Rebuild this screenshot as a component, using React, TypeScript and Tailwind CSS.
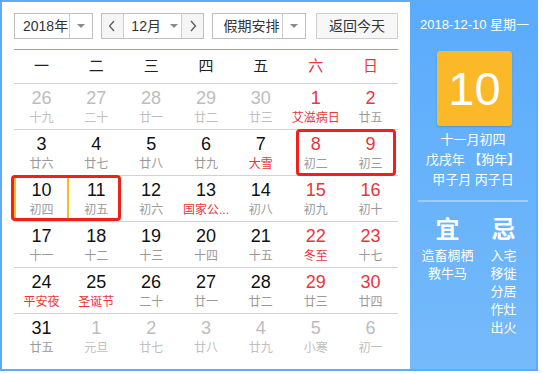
import React from 'react';

type Day = { d: number; l: string; other?: boolean; hol?: boolean; today?: boolean };

const weeks: Day[][] = [
  [
    { d: 26, l: '十九', other: true },
    { d: 27, l: '二十', other: true },
    { d: 28, l: '廿一', other: true },
    { d: 29, l: '廿二', other: true },
    { d: 30, l: '廿三', other: true },
    { d: 1, l: '艾滋病日', hol: true },
    { d: 2, l: '廿五' },
  ],
  [
    { d: 3, l: '廿六' },
    { d: 4, l: '廿七' },
    { d: 5, l: '廿八' },
    { d: 6, l: '廿九' },
    { d: 7, l: '大雪', hol: true },
    { d: 8, l: '初二' },
    { d: 9, l: '初三' },
  ],
  [
    { d: 10, l: '初四', today: true },
    { d: 11, l: '初五' },
    { d: 12, l: '初六' },
    { d: 13, l: '国家公...', hol: true },
    { d: 14, l: '初八' },
    { d: 15, l: '初九' },
    { d: 16, l: '初十' },
  ],
  [
    { d: 17, l: '十一' },
    { d: 18, l: '十二' },
    { d: 19, l: '十三' },
    { d: 20, l: '十四' },
    { d: 21, l: '十五' },
    { d: 22, l: '冬至', hol: true },
    { d: 23, l: '十七' },
  ],
  [
    { d: 24, l: '平安夜', hol: true },
    { d: 25, l: '圣诞节', hol: true },
    { d: 26, l: '二十' },
    { d: 27, l: '廿一' },
    { d: 28, l: '廿二' },
    { d: 29, l: '廿三' },
    { d: 30, l: '廿四' },
  ],
  [
    { d: 31, l: '廿五' },
    { d: 1, l: '元旦', other: true },
    { d: 2, l: '廿七', other: true },
    { d: 3, l: '廿八', other: true },
    { d: 4, l: '廿九', other: true },
    { d: 5, l: '小寒', other: true },
    { d: 6, l: '初一', other: true },
  ],
];

const weekdays = ['一', '二', '三', '四', '五', '六', '日'];

function Caret() {
  return <span className="w-0 h-0 border-x-[4px] border-x-transparent border-t-[4px] border-t-[#8a8a8a]" />;
}

function Chevron({ dir }: { dir: 'l' | 'r' }) {
  return (
    <svg width="8" height="12" viewBox="0 0 8 12" fill="none" stroke="#555" strokeWidth="1.2">
      {dir === 'l' ? <polyline points="6,1 1.5,6 6,11" /> : <polyline points="2,1 6.5,6 2,11" />}
    </svg>
  );
}

function DayCell({ day, col }: { day: Day; col: number }) {
  const weekend = col >= 5;
  let numColor = 'text-[#111]';
  if (day.other) numColor = 'text-[#bdbdbd]';
  else if (weekend) numColor = 'text-[#e8363b]';
  let lunarColor = 'text-[#9a9a9a]';
  if (day.other) lunarColor = 'text-[#c0c0c0]';
  else if (day.hol) lunarColor = 'text-[#e8363b]';
  return (
    <div
      className={`h-[46px] border-t border-[#d2d2d2] flex flex-col items-center pt-[4px] ${
        day.today ? 'shadow-[inset_0_0_0_2px_#fbb829]' : ''
      }`}
    >
      <span className={`text-[18px] leading-[20px] ${numColor}`}>{day.d}</span>
      <span className={`mt-[2px] text-[12px] leading-[16px] whitespace-nowrap ${lunarColor}`}>{day.l}</span>
    </div>
  );
}

export default function App() {
  return (
    <div
      className="w-[538px] h-[371px] border-2 border-[#5eabf7] flex bg-white"
      style={{ fontFamily: '"Liberation Sans", "Noto Sans CJK SC", sans-serif' }}
    >
      <div className="w-[408px] bg-white px-[12px] pt-[11px] flex flex-col">
        <div className="flex items-center h-[26px] text-[14px] text-[#333]">
          <div className="w-[79px] h-[26px] border border-[#bfbfbf] flex items-center">
            <span className="flex-1 pl-[8px] leading-[24px]">2018年</span>
            <span className="w-[23px] h-full border-l border-[#d0d0d0] flex items-center justify-center">
              <Caret />
            </span>
          </div>
          <div className="ml-[8px] w-[104px] h-[26px] border border-[#bfbfbf] flex items-center">
            <span className="w-[22px] h-full bg-[#f5f5f5] border-r border-[#d0d0d0] flex items-center justify-center">
              <Chevron dir="l" />
            </span>
            <span className="flex-1 h-full flex items-center justify-center gap-[9px] pl-[4px]">
              <span className="leading-[24px]">12月</span>
              <Caret />
            </span>
            <span className="w-[22px] h-full bg-[#f5f5f5] border-l border-[#d0d0d0] flex items-center justify-center">
              <Chevron dir="r" />
            </span>
          </div>
          <div className="ml-[8px] w-[94px] h-[26px] border border-[#bfbfbf] flex items-center">
            <span className="flex-1 pl-[10px] leading-[24px]">假期安排</span>
            <span className="w-[23px] h-full border-l border-[#d0d0d0] flex items-center justify-center">
              <Caret />
            </span>
          </div>
          <div className="ml-[10px] w-[82px] h-[26px] border border-[#cfcfcf] bg-[#f7f7f7] flex items-center justify-center leading-[24px]">
            返回今天
          </div>
        </div>

        <div className="mt-[10px] border-t border-[#65adf5]">
          <div className="grid grid-cols-7 h-[33px] items-center text-[15px]">
            {weekdays.map((w, i) => (
              <span key={w} className={`text-center ${i >= 5 ? 'text-[#e8363b]' : 'text-[#222]'}`}>
                {w}
              </span>
            ))}
          </div>
          <div className="relative">
            <div className="grid grid-cols-7">
              {weeks.map((wk, r) =>
                wk.map((day, c) => <DayCell key={`${r}-${c}`} day={day} col={c} />)
              )}
            </div>
            <div className="absolute left-[-3px] top-[92px] w-[110px] h-[46px] border-[3px] border-[#f0201a] rounded-[4px]" />
            <div className="absolute left-[282px] top-[46px] w-[100px] h-[47px] border-[3px] border-[#f0201a] rounded-[4px]" />
          </div>
        </div>
      </div>

      <div className="flex-1 bg-gradient-to-b from-[#5aabfc] to-[#75bafa] flex flex-col items-center text-white pt-[14px]">
        <div className="text-[13px] leading-[18px] pl-[3px]">2018-12-10 星期一</div>
        <div className="mt-[17px] ml-[3px] w-[75px] h-[75px] bg-[#fbb829] rounded-[3px] shadow-[0_1px_2px_rgba(0,0,0,0.15)] flex items-center justify-center text-[47px] leading-none">
          10
        </div>
        <div className="mt-[4px] text-[13px] leading-[20px] text-center">
          <div>十一月初四</div>
          <div>戊戌年 【狗年】</div>
          <div>甲子月 丙子日</div>
        </div>
        <div className="mt-[10px] w-[110px] h-[2px] bg-white/35" />
        <div className="mt-[14px] flex pl-[5px]">
          <div className="w-[56px] flex flex-col items-center">
            <div className="text-[24px] leading-[28px] font-bold">宜</div>
            <div className="mt-[3px] text-[13px] leading-[18px] text-center whitespace-nowrap">
              <div>造畜椆栖</div>
              <div>教牛马</div>
            </div>
          </div>
          <div className="w-[56px] flex flex-col items-center">
            <div className="text-[24px] leading-[28px] font-bold">忌</div>
            <div className="mt-[3px] text-[13px] leading-[18px] text-center">
              <div>入宅</div>
              <div>移徙</div>
              <div>分居</div>
              <div>作灶</div>
              <div>出火</div>
            </div>
          </div>
        </div>
      </div>
    </div>
  );
}
